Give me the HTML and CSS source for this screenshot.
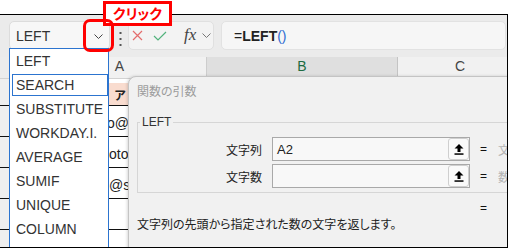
FILE: index.html
```html
<!DOCTYPE html>
<html lang="ja">
<head>
    <meta charset="UTF-8">
    <meta name="viewport" content="width=device-width, initial-scale=1.0">
    <title>関数の引数 - LEFT</title>
    <link rel="stylesheet" href="styles.css">
</head>
<body>
    <div class="callout">クリック</div>
    <div class="highlight"></div>

    <div class="frame">
        <div class="toolbar">
            <div class="namebox">
                <span>LEFT</span>
                <svg width="9" height="5" viewBox="0 0 9 5"><polyline points="0.5,0.5 4.5,4.5 8.5,0.5" fill="none" stroke="#444" stroke-width="1"/></svg>
            </div>
            <div class="dots">
                <svg width="3" height="14" viewBox="0 0 3 14"><rect x="0.5" y="0" width="2" height="2" fill="#555"/><rect x="0.5" y="6" width="2" height="2" fill="#555"/><rect x="0.5" y="12" width="2" height="2" fill="#555"/></svg>
            </div>
            <div class="fx-group">
                <svg class="cancel" width="11" height="11" viewBox="0 0 11 11"><path d="M1 1L10 10M10 1L1 10" stroke="#e46c6c" stroke-width="1.2" fill="none"/></svg>
                <svg class="enter" width="14" height="10" viewBox="0 0 14 10"><path d="M1 5L5 9L13 1" stroke="#52b27c" stroke-width="1.2" fill="none"/></svg>
                <span class="fx">fx</span>
                <svg width="9" height="5" viewBox="0 0 9 5"><polyline points="0.5,0.5 4.5,4.5 8.5,0.5" fill="none" stroke="#777" stroke-width="1"/></svg>
            </div>
            <div class="formula">=<b>LEFT</b><span class="paren">()</span></div>
        </div>

        <div class="col-header">
            <div class="corner"></div>
            <div class="col col-a">A</div>
            <div class="col col-b">B</div>
            <div class="col col-c">C</div>
        </div>

        <div class="sheet">
            <div class="row spacer"><div class="rh"></div><div class="cell"></div></div>
            <div class="row head"><div class="rh"></div><div class="cell"><span class="t-head">アドレス</span></div></div>
            <div class="row"><div class="rh"></div><div class="cell"><span class="t-1">o@sample</span></div></div>
            <div class="row"><div class="rh"></div><div class="cell"><span class="t-2">otoco</span></div></div>
            <div class="row"><div class="rh"></div><div class="cell"><span class="t-3">@sc</span></div></div>
            <div class="row"><div class="rh"></div><div class="cell"></div></div>
            <div class="row"><div class="rh"></div><div class="cell"></div></div>
        </div>

        <div class="dropdown">
            <div class="dd-item">LEFT</div>
            <div class="dd-item sel">SEARCH</div>
            <div class="dd-item">SUBSTITUTE</div>
            <div class="dd-item">WORKDAY.I.</div>
            <div class="dd-item">AVERAGE</div>
            <div class="dd-item">SUMIF</div>
            <div class="dd-item">UNIQUE</div>
            <div class="dd-item">COLUMN</div>
            <div class="dd-item">ROW</div>
        </div>

        <div class="dialog">
            <div class="dlg-title">関数の引数</div>
            <fieldset class="args">
                <legend>LEFT</legend>
                <div class="arg-row">
                    <div class="arg-label">文字列</div>
                    <div class="arg-input">
                        <span>A2</span>
                        <span class="ref-btn"><svg width="10" height="11" viewBox="0 0 10 11"><polygon points="5,0 9.5,4.5 6.5,4.5 6.5,8 3.5,8 3.5,4.5 0.5,4.5" fill="#000"/><rect x="0.5" y="9.3" width="9" height="1.5" fill="#000"/></svg></span>
                    </div>
                    <div class="eq">=</div>
                    <div class="preview">文</div>
                </div>
                <div class="arg-row">
                    <div class="arg-label">文字数</div>
                    <div class="arg-input">
                        <span></span>
                        <span class="ref-btn"><svg width="10" height="11" viewBox="0 0 10 11"><polygon points="5,0 9.5,4.5 6.5,4.5 6.5,8 3.5,8 3.5,4.5 0.5,4.5" fill="#000"/><rect x="0.5" y="9.3" width="9" height="1.5" fill="#000"/></svg></span>
                    </div>
                    <div class="eq">=</div>
                    <div class="preview">数</div>
                </div>
            </fieldset>
            <div class="result">=</div>
            <div class="desc">文字列の先頭から指定された数の文字を返します。</div>
        </div>
    </div>
</body>
</html>
```

FILE: styles.css
```css
body {
    margin: 0;
    padding-top: 14px;
    width: 508px;
    height: 248px;
    box-sizing: border-box;
    position: relative;
    overflow: hidden;
    background: #ffffff;
    font-family: "Liberation Sans", Arial, sans-serif;
    color: #222;
}
.callout {
    position: absolute;
    left: 103px;
    top: 1px;
    width: 69px;
    height: 25px;
    box-sizing: border-box;
    border: 3px solid #ff0000;
    background: #ffffff;
    color: #ff0000;
    font: bold 14px/19px "Noto Sans CJK JP", sans-serif;
    font-feature-settings: "palt";
    text-align: center;
    z-index: 10;
}
.highlight {
    position: absolute;
    left: 83px;
    top: 19px;
    width: 31px;
    height: 33px;
    box-sizing: border-box;
    border: 3px solid #ff0000;
    border-radius: 7px;
    z-index: 11;
}
.frame {
    position: relative;
    height: 234px;
    box-sizing: border-box;
    border-top: 1px solid #000;
    border-right: 1px solid #000;
    border-bottom: 1px solid #000;
    background: #ebebeb;
    overflow: hidden;
}

/* formula bar */
.toolbar {
    height: 42px;
    box-sizing: border-box;
    padding: 6px 1px 0 9px;
    display: flex;
    align-items: flex-start;
}
.namebox {
    width: 101px;
    height: 29px;
    box-sizing: border-box;
    border: 1px solid #dcdcdc;
    border-radius: 5px;
    background: #f7f7f7;
    display: flex;
    align-items: center;
    justify-content: space-between;
    padding: 0 6px;
    font-size: 14px;
    color: #333;
}
.namebox svg {
    margin-top: 2px;
}
.dots {
    margin: 11px 0 0 9px;
    height: 14px;
}
.fx-group {
    margin-left: 6px;
    width: 86px;
    height: 29px;
    box-sizing: border-box;
    border: 1px solid #e0e0e0;
    border-radius: 5px;
    background: #f3f3f3;
    display: flex;
    align-items: center;
    padding-left: 3px;
}
.fx-group .enter {
    margin-left: 10px;
}
.fx {
    margin-left: 17px;
    font: italic 17px "Liberation Serif", serif;
    color: #444;
    line-height: 17px;
    margin-top: -3px;
}
.fx-group svg:last-child {
    margin-left: 6px;
}
.formula {
    flex: 1;
    margin-left: 7px;
    height: 29px;
    box-sizing: border-box;
    border: 1px solid #e2e2e2;
    border-radius: 5px;
    background: #f6f6f6;
    padding-left: 12px;
    display: flex;
    align-items: center;
    font-size: 14px;
    color: #222;
}
.formula .paren {
    color: #2d6bd1;
}

/* sheet */
.col-header {
    display: flex;
    height: 21px;
    border-bottom: 1px solid #d2d2d2;
    font-size: 14px;
    color: #444;
}
.col {
    display: flex;
    align-items: center;
    justify-content: center;
    padding-bottom: 3px;
    box-sizing: border-box;
    flex-shrink: 0;
}
.corner {
    width: 33px;
    flex-shrink: 0;
    background: #ececec;
}
.col-a {
    width: 174px;
    background: #f1f1f1;
    border-right: 1px solid #cdcdcd;
}
.col-b {
    width: 191px;
    background: #dfdfdf;
    color: #1d6b41;
    border-right: 1px solid #c4c4c4;
}
.col-c {
    width: 124px;
    background: #f1f1f1;
}
.sheet {
    background: #ffffff;
}
.row {
    display: flex;
    height: 30px;
    border-bottom: 1px solid #111;
}
.row.spacer {
    height: 4px;
    border-bottom: none;
}
.row.head {
    height: 22px;
    background: #f9dccf;
}
.rh {
    width: 33px;
    flex-shrink: 0;
    background: #efefef;
}
.cell {
    width: 174px;
    display: flex;
    align-items: flex-end;
    padding-bottom: 5px;
    box-sizing: border-box;
    font-size: 14px;
    white-space: nowrap;
    overflow: hidden;
}
.row.head .cell {
    align-items: center;
    padding-bottom: 0;
}
.t-head {
    padding-left: 81px;
    font: bold 12px "Noto Sans CJK JP", sans-serif;
}
.t-1 {
    padding-left: 74px;
}
.t-2 {
    padding-left: 76px;
}
.t-3 {
    padding-left: 76px;
}

/* autocomplete list */
.dropdown {
    position: absolute;
    left: 9px;
    top: 33px;
    width: 100px;
    height: 230px;
    box-sizing: border-box;
    border: 1px solid #2c74cf;
    background: #ffffff;
    z-index: 3;
}
.dd-item {
    height: 24px;
    box-sizing: border-box;
    padding-left: 6px;
    display: flex;
    align-items: center;
    font-size: 14px;
    color: #333;
    white-space: nowrap;
}
.dd-item.sel {
    height: 22px;
    margin: 1px 0 1px 2px;
    padding-left: 3px;
    border: 1px solid #2c74cf;
}

/* function arguments dialog */
.dialog {
    position: absolute;
    left: 128px;
    top: 61px;
    width: 430px;
    height: 230px;
    box-sizing: border-box;
    border: 1px solid #c4c4c4;
    border-radius: 8px;
    background: #f1f1f1;
    box-shadow: -1px 0 3px rgba(0, 0, 0, 0.15);
    font: 12px "Noto Sans CJK JP", sans-serif;
    font-feature-settings: "palt";
    color: #222;
    z-index: 2;
}
.dlg-title {
    margin: 5px 0 0 8px;
    line-height: 18px;
    color: #9c9c9c;
}
.args {
    margin: 15px 0 0 8px;
    padding: 8px 0 4px 0;
    width: 380px;
    min-width: 0;
    border: 1px solid #d6d6d6;
}
.args legend {
    margin-left: 2px;
    padding: 0 2px;
    font: 12px/14px "Liberation Sans", Arial, sans-serif;
    color: #333;
}
.arg-row {
    display: grid;
    grid-template-columns: 124px 198px 8px auto;
    column-gap: 10px;
    align-items: center;
    height: 24px;
}
.arg-row + .arg-row {
    margin-top: 3px;
}
.arg-label {
    text-align: right;
}
.arg-input {
    height: 24px;
    box-sizing: border-box;
    border: 1px solid #a9a9a9;
    background: #f8f8f8;
    display: flex;
    align-items: center;
    justify-content: space-between;
    padding-left: 4px;
    font: 13px "Liberation Sans", Arial, sans-serif;
    color: #222;
}
.ref-btn {
    width: 21px;
    height: 22px;
    box-sizing: border-box;
    border: 1px solid #cfcfcf;
    border-radius: 3px;
    background: #fafafa;
    display: flex;
    align-items: center;
    justify-content: center;
}
.eq,
.result {
    font: 12px "Liberation Sans", Arial, sans-serif;
    color: #111;
}
.preview {
    color: #b4b4b4;
}
.result {
    height: 16px;
    line-height: 16px;
    margin-top: 7px;
    padding-left: 351px;
}
.desc {
    padding-left: 8px;
    line-height: 16px;
}
```
